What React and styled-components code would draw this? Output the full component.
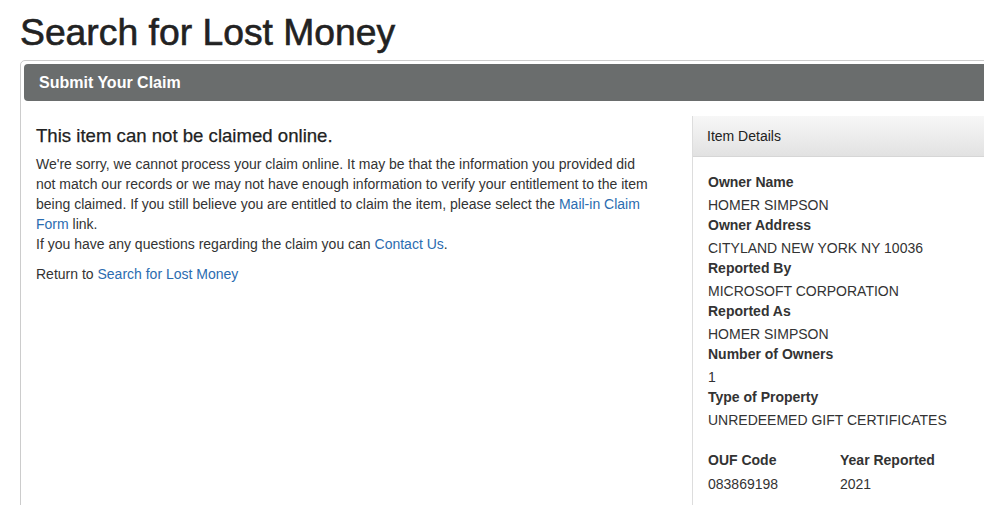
import React from 'react';
import styled, { createGlobalStyle } from 'styled-components';

const GlobalStyle = createGlobalStyle`
  html, body {
    margin: 0;
    padding: 0;
    background: #fff;
    overflow: hidden;
  }
  body {
    font-family: "Liberation Sans", Arial, Helvetica, sans-serif;
    font-size: 14px;
    line-height: 20px;
    color: #333;
  }
`;

const Page = styled.div`
  padding: 12px 0 0 20px;
  width: 1140px;
`;

const PageTitle = styled.h1`
  margin: 0 0 8px;
  font-size: 37.3px;
  line-height: 40px;
  font-weight: 400;
  color: #222;
  -webkit-text-stroke: 0.6px #222;
`;

const Card = styled.div`
  border: 1px solid #ccc;
  border-radius: 5px;
  padding: 3px;
  min-height: 560px;
`;

const CardHeader = styled.div`
  background: #6a6d6d;
  border-radius: 4px;
  height: 37px;
  line-height: 37px;
  padding-left: 15px;
  color: #fff;
  font-size: 16px;
  font-weight: 700;
`;

const CardBody = styled.div`
  display: grid;
  grid-template-columns: 656px 1fr;
  padding: 15px 0 0 12px;
`;

const Main = styled.div`
  padding-right: 37px;
`;

const Heading = styled.h3`
  margin: 9px 0 7px;
  font-size: 18.6px;
  line-height: 22px;
  font-weight: 400;
  color: #222;
  -webkit-text-stroke: 0.25px #222;
`;

const Paragraph = styled.p`
  margin: 0 0 10px;
`;

const Link = styled.a`
  color: #2b6cb0;
  text-decoration: none;
`;

const Panel = styled.aside`
  border-left: 1px solid #ddd;
  min-height: 520px;
`;

const PanelHeader = styled.div`
  height: 40px;
  line-height: 40px;
  padding-left: 14px;
  background: linear-gradient(to bottom, #f7f7f7 0%, #e2e2e2 100%);
  border-bottom: 1px solid #d6d6d6;
  color: #222;
`;

const PanelBody = styled.div`
  padding: 15px 15px 20px;
`;

const Field = styled.div`
  margin-bottom: ${(p) => (p.$spaced ? '20px' : '0')};
`;

const Label = styled.div`
  font-weight: 700;
  color: #333;
`;

const Value = styled.div`
  margin-top: ${(p) => p.$gap || 3}px;
  color: #333;
`;

const FieldRow = styled.div`
  display: grid;
  grid-template-columns: 132px 132px;
`;

const details = [
  ['Owner Name', 'HOMER SIMPSON'],
  ['Owner Address', 'CITYLAND NEW YORK NY 10036'],
  ['Reported By', 'MICROSOFT CORPORATION'],
  ['Reported As', 'HOMER SIMPSON'],
  ['Number of Owners', '1'],
  ['Type of Property', 'UNREDEEMED GIFT CERTIFICATES'],
];

export default function App() {
  return (
    <>
      <GlobalStyle />
      <Page>
        <PageTitle>Search for Lost Money</PageTitle>
        <Card>
          <CardHeader>Submit Your Claim</CardHeader>
          <CardBody>
            <Main>
              <Heading>This item can not be claimed online.</Heading>
              <Paragraph>
                We're sorry, we cannot process your claim online. It may be that the information you
                provided did not match our records or we may not have enough information to verify
                your entitlement to the item being claimed. If you still believe you are entitled to
                claim the item, please select the <Link href="#">Mail-in Claim Form</Link> link.
                <br />
                If you have any questions regarding the claim you can <Link href="#">Contact Us</Link>.
              </Paragraph>
              <Paragraph>
                Return to <Link href="#">Search for Lost Money</Link>
              </Paragraph>
            </Main>
            <Panel>
              <PanelHeader>Item Details</PanelHeader>
              <PanelBody>
                {details.map(([label, value], i) => (
                  <Field key={label} $spaced={i === details.length - 1}>
                    <Label>{label}</Label>
                    <Value>{value}</Value>
                  </Field>
                ))}
                <FieldRow>
                  <Field>
                    <Label>OUF Code</Label>
                    <Value $gap={4}>083869198</Value>
                  </Field>
                  <Field>
                    <Label>Year Reported</Label>
                    <Value $gap={4}>2021</Value>
                  </Field>
                </FieldRow>
              </PanelBody>
            </Panel>
          </CardBody>
        </Card>
      </Page>
    </>
  );
}
